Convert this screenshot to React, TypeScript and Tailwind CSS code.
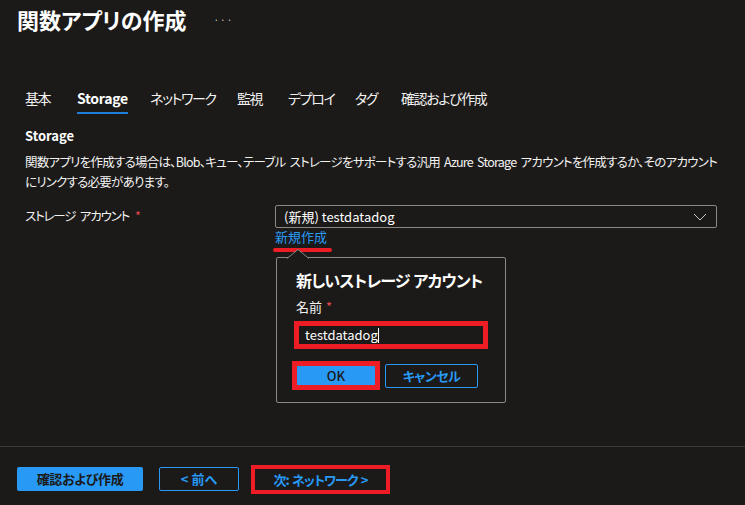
import React from "react";

const tabs: { t: string; w: string }[] = [
  { t: "基本", w: "w-[52px]" },
  { t: "Storage", w: "w-[73px]" },
  { t: "ネットワーク", w: "w-[87px]" },
  { t: "監視", w: "w-[51px]" },
  { t: "デプロイ", w: "w-[67px]" },
  { t: "タグ", w: "w-[46px]" },
  { t: "確認および作成", w: "w-[110px]" },
];

export default function App() {
  return (
    <div className="relative w-[745px] h-[505px] overflow-hidden bg-[#1b1a19] text-[#f3f2f1] flex flex-col [font-family:'Noto_Sans_CJK_JP','Noto_Sans',sans-serif] [font-feature-settings:'palt']">
      <header className="flex items-center h-[30px] mt-[4px] pl-[17px]">
        <h1 className="text-[22px] leading-[30px] font-bold text-white">関数アプリの作成</h1>
        <span className="ml-[27px] mt-[2px] text-[10px] tracking-[1px] text-[#c8c6c4] leading-none">···</span>
      </header>

      <nav className="flex pl-[25px] mt-[50px]">
        {tabs.map((tab, i) => (
          <div key={tab.t} className={`${tab.w} flex`}>
            <div className="flex flex-col">
              <span
                className={`text-[14px] leading-[20px] pt-[4px] pb-[4px] whitespace-nowrap ${
                  i === 1 ? "font-bold text-white tracking-[-0.3px]" : "text-[#f3f2f1] tracking-[-1.4px]"
                }`}
              >
                {tab.t}
              </span>
              <div className={`h-[2px] ${i === 1 ? "bg-[#1f7fd8]" : "bg-transparent"}`} />
            </div>
          </div>
        ))}
      </nav>

      <section className="px-[25px]">
        <h2 className="mt-[12px] text-[13px] leading-[20px] font-bold text-white">Storage</h2>
        <p className="mt-[6px] text-[12.5px] leading-[20px] text-[#f3f2f1] tracking-[-0.75px] [word-spacing:2px]">
          関数アプリを作成する場合は、Blob、キュー、テーブル ストレージをサポートする汎用 Azure Storage アカウントを作成するか、そのアカウントにリンクする必要があります。
        </p>
        <div className="mt-[13px] flex">
          <div className="w-[250px] h-[23px] flex items-center text-[12.5px] tracking-[-1.2px] [word-spacing:3px]">
            <span>ストレージ アカウント</span>
            <span className="ml-[6px] text-[#e8484f]">*</span>
          </div>
          <div className="flex flex-col">
            <div className="w-[442px] h-[23px] border border-[#8a8886] rounded-[2px] flex items-center justify-between pl-[8px] pr-[9px] text-[13px] text-white">
              <span>(新規) testdatadog</span>
              <svg width="14" height="8" viewBox="0 0 14 8" fill="none" stroke="#c8c6c4" strokeWidth="1">
                <path d="M1 1l6 6 6-6" />
              </svg>
            </div>
            <span className="mt-[1px] text-[13px] leading-[16px] text-[#2899f5]">新規作成</span>
            <div className="mt-[3px] -ml-[2px] w-[59px] h-[4px] rounded-full bg-[#ee1c25]" />
          </div>
        </div>
      </section>

      <div className="absolute left-[276px] top-[257px] w-[230px] h-[146px] border border-[#8a8886] rounded-[2px] bg-[#1b1a19] pl-[19px] pt-[10px]">
        <svg className="absolute left-[10px] -top-[9px]" width="22" height="10" viewBox="0 0 22 10">
          <path d="M0 9.5 L11 0.5 L22 9.5" fill="#1b1a19" stroke="#8a8886" strokeWidth="1" />
        </svg>
        <div className="text-[16px] leading-[24px] font-bold text-white tracking-[-0.8px] [word-spacing:1px]">新しいストレージ アカウント</div>
        <div className="mt-[6px] text-[13px] leading-[18px] text-[#f3f2f1]">
          名前<span className="ml-[4px] text-[#e8484f]">*</span>
        </div>
        <div className="mt-[5px] -ml-[2px] w-[194px] h-[28px] border-[5px] border-[#ee1c25] bg-[#1b1a19] flex items-center pl-[6px] text-[13px] text-white">
          testdatadog<span className="w-[1px] h-[15px] bg-white" />
        </div>
        <div className="mt-[12px] -ml-[4px] flex items-center gap-[5px]">
          <div className="w-[88px] h-[29px] border-[5px] border-[#ee1c25] flex">
            <div className="flex-1 bg-[#2899f5] flex items-center justify-center text-[13px] font-medium text-[#1b1a19]">OK</div>
          </div>
          <div className="w-[93px] h-[24px] border border-[#2899f5] rounded-[2px] flex items-center justify-center text-[13px] font-bold text-[#2899f5] tracking-[-0.5px]">キャンセル</div>
        </div>
      </div>

      <footer className="mt-auto h-[59px] border-t border-[#3b3a39] flex items-start pt-[20px] pl-[17px]">
        <div className="w-[126px] h-[24px] rounded-[2px] bg-[#2899f5] flex items-center justify-center text-[13px] font-semibold text-[#1b1a19] tracking-[-0.3px]">確認および作成</div>
        <div className="ml-[16px] w-[80px] h-[24px] rounded-[2px] border border-[#2899f5] flex items-center justify-center text-[13px] font-bold text-[#2899f5]">&lt; 前へ</div>
        <div className="ml-[12px] -mt-[2px] w-[139px] h-[29px] border-[4px] border-[#ee1c25] flex items-center justify-center text-[13px] font-bold text-[#2899f5] tracking-[-0.9px] [word-spacing:1px]">次: ネットワーク &gt;</div>
      </footer>
    </div>
  );
}
